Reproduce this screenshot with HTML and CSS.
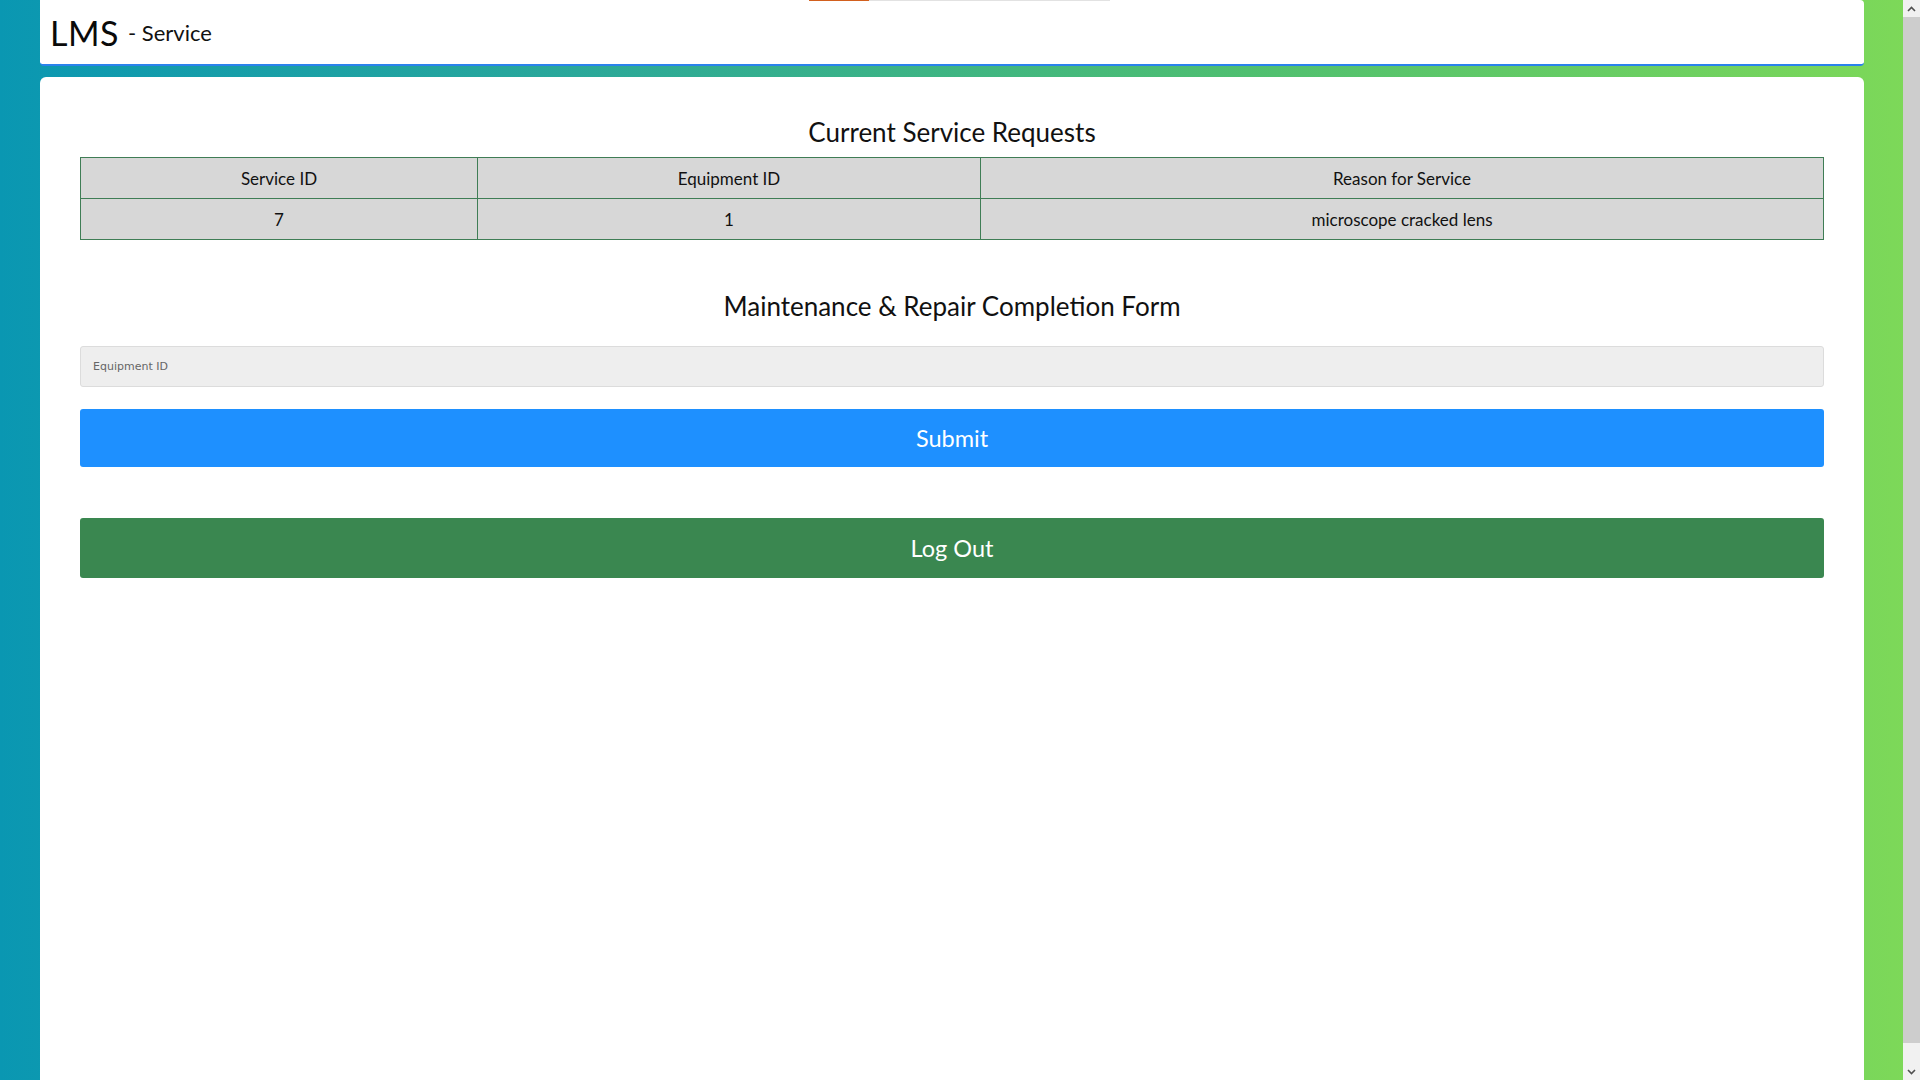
FILE: index.html
```html
<!DOCTYPE html>
<html lang="en">
<head>
<meta charset="utf-8">
<title>LMS - Service</title>
<link rel="stylesheet" href="styles.css">
</head>
<body>
<div class="loader"><span class="loader-done"></span><span class="loader-rest"></span></div>
<div class="page">
  <header class="topbar">
    <span class="brand">LMS</span>
    <span class="subtitle">- Service</span>
  </header>
  <main class="card">
    <h2 class="section-title">Current Service Requests</h2>
    <table class="requests">
      <colgroup>
        <col class="c1"><col class="c2"><col class="c3">
      </colgroup>
      <thead>
        <tr><th>Service ID</th><th>Equipment ID</th><th>Reason for Service</th></tr>
      </thead>
      <tbody>
        <tr><td>7</td><td>1</td><td>microscope cracked lens</td></tr>
      </tbody>
    </table>
    <h2 class="section-title form-title">Maintenance &amp; Repair Completion Form</h2>
    <form class="form">
      <input class="field" type="text" placeholder="Equipment ID">
      <button class="btn btn-submit" type="button">Submit</button>
      <button class="btn btn-logout" type="button">Log Out</button>
    </form>
  </main>
</div>
<div class="scrollbar">
  <div class="sb-arrow sb-up"><svg width="9" height="6" viewBox="0 0 9 6"><path d="M1 5 L4.5 1.5 L8 5" fill="none" stroke="#505050" stroke-width="1.6"/></svg></div>
  <div class="sb-thumb"></div>
  <div class="sb-track"></div>
  <div class="sb-arrow sb-down"><svg width="9" height="6" viewBox="0 0 9 6"><path d="M1 1 L4.5 4.5 L8 1" fill="none" stroke="#505050" stroke-width="1.6"/></svg></div>
</div>
</body>
</html>
```

FILE: styles.css
```css
html, body {
  margin: 0;
  padding: 0;
  height: 100%;
  overflow: hidden;
}
body {
  font-family: Lato, "Noto Sans", sans-serif;
  background: linear-gradient(to right, #0a97b2 0%, #2aa89a 30%, #4fbf70 65%, #7ed958 100%);
  color: #111;
}
.page {
  width: 1824px;
  margin-left: 40px;
  display: flex;
  flex-direction: column;
  height: 100%;
}
.topbar {
  background: #fff;
  border-bottom: 2px solid #2a82ec;
  border-radius: 0 4px 4px 4px;
  display: flex;
  align-items: center;
  padding-left: 10px;
  box-sizing: border-box;
  height: 66px;
  flex: none;
}
.brand {
  font-size: 34px;
  font-weight: 400;
  color: #0a0a0a;
  letter-spacing: 0.5px;
}
.subtitle {
  font-size: 22px;
  margin-left: 9px;
  margin-top: 1px;
  color: #111;
}
.card {
  margin-top: 11px;
  background: #fff;
  border-radius: 6px 6px 0 0;
  flex: 1;
  padding: 40px 40px 0 40px;
}
.section-title {
  margin: 0 0 10px 0;
  font-size: 26px;
  line-height: 30px;
  font-weight: 400;
  text-align: center;
  color: #111;
}
.form-title {
  margin-top: 51px;
  margin-bottom: 25px;
}
.requests {
  width: 100%;
  border-collapse: collapse;
  background: #d7d7d7;
  font-size: 17px;
  table-layout: fixed;
}
.requests .c1 { width: 397px; }
.requests .c2 { width: 503px; }
.requests th, .requests td {
  border: 1px solid #3f7d55;
  height: 40px;
  padding: 0;
  text-align: center;
  font-weight: 400;
  color: #111;
}
.form {
  display: flex;
  flex-direction: column;
}
.field {
  height: 41px;
  box-sizing: border-box;
  background: #eeeeee;
  border: 1px solid #dcdcdc;
  border-radius: 3px;
  padding: 0 12px;
  font-family: "DejaVu Sans", Verdana, sans-serif;
  font-size: 11px;
  margin: 0 0 22px 0;
}
.field::placeholder { color: #666; }
.btn {
  height: 58px;
  border: none;
  border-radius: 3px;
  color: #fff;
  font-family: Lato, "Noto Sans", sans-serif;
  font-size: 23.5px;
  cursor: pointer;
}
.btn-submit {
  background: #1e90ff;
  margin-bottom: 51px;
}
.btn-logout {
  background: #3a8750;
  height: 60px;
}
.loader {
  position: fixed;
  top: 0;
  left: 809px;
  display: flex;
  height: 1px;
}
.loader-done { width: 60px; background: #d2601e; }
.loader-rest { width: 241px; background: #e2e2e2; }
.scrollbar {
  position: fixed;
  top: 0;
  right: 0;
  width: 17px;
  height: 100%;
  background: #f1f1f1;
  display: flex;
  flex-direction: column;
}
.sb-arrow {
  height: 17px;
  display: flex;
  align-items: center;
  justify-content: center;
  flex: none;
}
.sb-thumb {
  flex: 1;
  background: #cdcdcd;
}
.sb-track {
  height: 20px;
  flex: none;
}
```
